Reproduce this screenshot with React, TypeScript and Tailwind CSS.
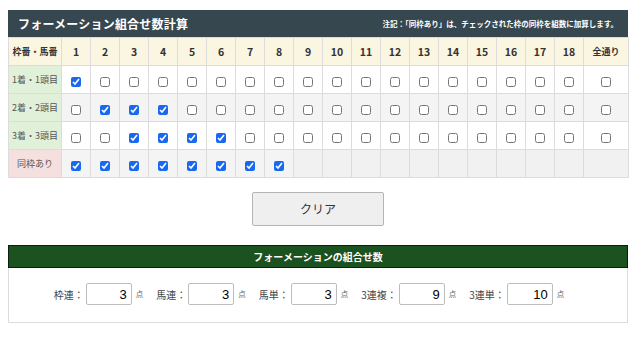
import React, { useState } from "react";

const FONT = '"Noto Sans CJK JP", "Noto Sans", sans-serif';

const rowLabels = ["1着・1頭目", "2着・2頭目", "3着・3頭目"];
const init = [
  [1],
  [2, 3, 4],
  [3, 4, 5, 6],
];

function Box({ checked, onChange }: { checked: boolean; onChange: () => void }) {
  return (
    <input
      type="checkbox"
      checked={checked}
      onChange={onChange}
      className="m-0 h-[10px] w-[10px] align-middle accent-[#1868f0]"
    />
  );
}

export default function App() {
  const [rows, setRows] = useState<boolean[][]>(
    init.map((r) => Array.from({ length: 19 }, (_, i) => r.includes(i + 1)))
  );
  const [same, setSame] = useState<boolean[]>(Array.from({ length: 8 }, () => true));
  const cols = Array.from({ length: 18 }, (_, i) => i + 1);

  const toggle = (r: number, c: number) =>
    setRows((p) => p.map((row, ri) => (ri === r ? row.map((v, ci) => (ci === c ? !v : v)) : row)));

  const results = [
    { label: "枠連：", v: "3" },
    { label: "馬連：", v: "3" },
    { label: "馬単：", v: "3" },
    { label: "3連複：", v: "9" },
    { label: "3連単：", v: "10" },
  ];

  return (
    <div className="min-h-[339px] w-[640px] bg-white pt-[10px]" style={{ fontFamily: FONT }}>
      <div className="mx-2 w-[620px]">
        <div className="flex h-[27px] items-center justify-between bg-[#36474f] pl-[10px] pr-[10px] text-white">
          <span className="text-[12px] font-bold leading-none tracking-[0.2px]">フォーメーション組合せ数計算</span>
          <span className="text-[7.5px] font-bold leading-none">注記：「同枠あり」は、チェックされた枠の同枠を組数に加算します。</span>
        </div>
        <table className="w-[620px] table-fixed border-collapse border border-[#dcdcdc]">
          <colgroup>
            <col className="w-[53px]" />
            {cols.map((c) => (
              <col key={c} className="w-[29px]" />
            ))}
            <col className="w-[45px]" />
          </colgroup>
          <thead>
            <tr className="h-[28px] bg-[#fbf6e1]">
              <th className="border border-[#dcdcdc] p-0 text-[9px] font-bold text-[#333]">枠番・馬番</th>
              {cols.map((c) => (
                <th key={c} className="border border-[#dcdcdc] p-0 text-[10.5px] font-bold text-[#333]">
                  {c}
                </th>
              ))}
              <th className="border border-[#dcdcdc] p-0 text-[9px] font-bold text-[#333]">全通り</th>
            </tr>
          </thead>
          <tbody>
            {rowLabels.map((lab, ri) => (
              <tr key={lab} className={`h-[28px] ${ri === 1 ? "bg-[#f4f4f4]" : "bg-white"}`}>
                <td className="border border-[#dcdcdc] bg-[#e1f0d8] p-0 text-center text-[9px] text-[#555]">{lab}</td>
                {Array.from({ length: 19 }, (_, ci) => (
                  <td key={ci} className="border border-[#dcdcdc] p-0 text-center">
                    <Box checked={rows[ri][ci]} onChange={() => toggle(ri, ci)} />
                  </td>
                ))}
              </tr>
            ))}
            <tr className="h-[28px] bg-[#f4f4f4]">
              <td className="border border-[#dcdcdc] bg-[#f6dfdf] p-0 text-center text-[9px] text-[#555]">同枠あり</td>
              {Array.from({ length: 19 }, (_, ci) => (
                <td key={ci} className={`border border-[#dcdcdc] p-0 text-center ${ci >= 8 ? "bg-[#f1f1f1]" : ""}`}>
                  {ci < 8 ? (
                    <Box
                      checked={same[ci]}
                      onChange={() => setSame((p) => p.map((v, i) => (i === ci ? !v : v)))}
                    />
                  ) : null}
                </td>
              ))}
            </tr>
          </tbody>
        </table>

        <div className="mt-[14px] flex justify-center">
          <button
            onClick={() => {
              setRows((p) => p.map((r) => r.map(() => false)));
              setSame((p) => p.map(() => false));
            }}
            className="h-[34px] w-[132px] rounded-[2px] border border-[#b4b4b4] bg-[#efefef] text-[12px] text-[#333]"
          >
            クリア
          </button>
        </div>

        <div className="mt-[19px] flex h-[23px] items-center justify-center border border-[#0e1e0e] bg-[#1c5120] text-[10px] font-bold text-white">
          フォーメーションの組合せ数
        </div>
        <div className="flex h-[55px] items-center justify-center border border-t-0 border-[#dcdcdc] pb-[2px] pr-[18px]">
          {results.map((r, i) => (
            <div key={r.label} className={`flex items-center ${i > 0 ? "ml-[13px]" : ""}`}>
              <span className="text-[10px] text-[#444]">{r.label}</span>
              <input
                readOnly
                value={r.v}
                className="ml-[2px] h-[22px] w-[46px] rounded-[2px] border border-[#bdbdbd] bg-white px-[4px] text-right text-[13px] text-black outline-none"
                style={{ fontFamily: '"Liberation Sans", Arial, sans-serif' }}
              />
              <span className="ml-[4px] text-[7.5px] text-[#666]">点</span>
            </div>
          ))}
        </div>
      </div>
    </div>
  );
}
